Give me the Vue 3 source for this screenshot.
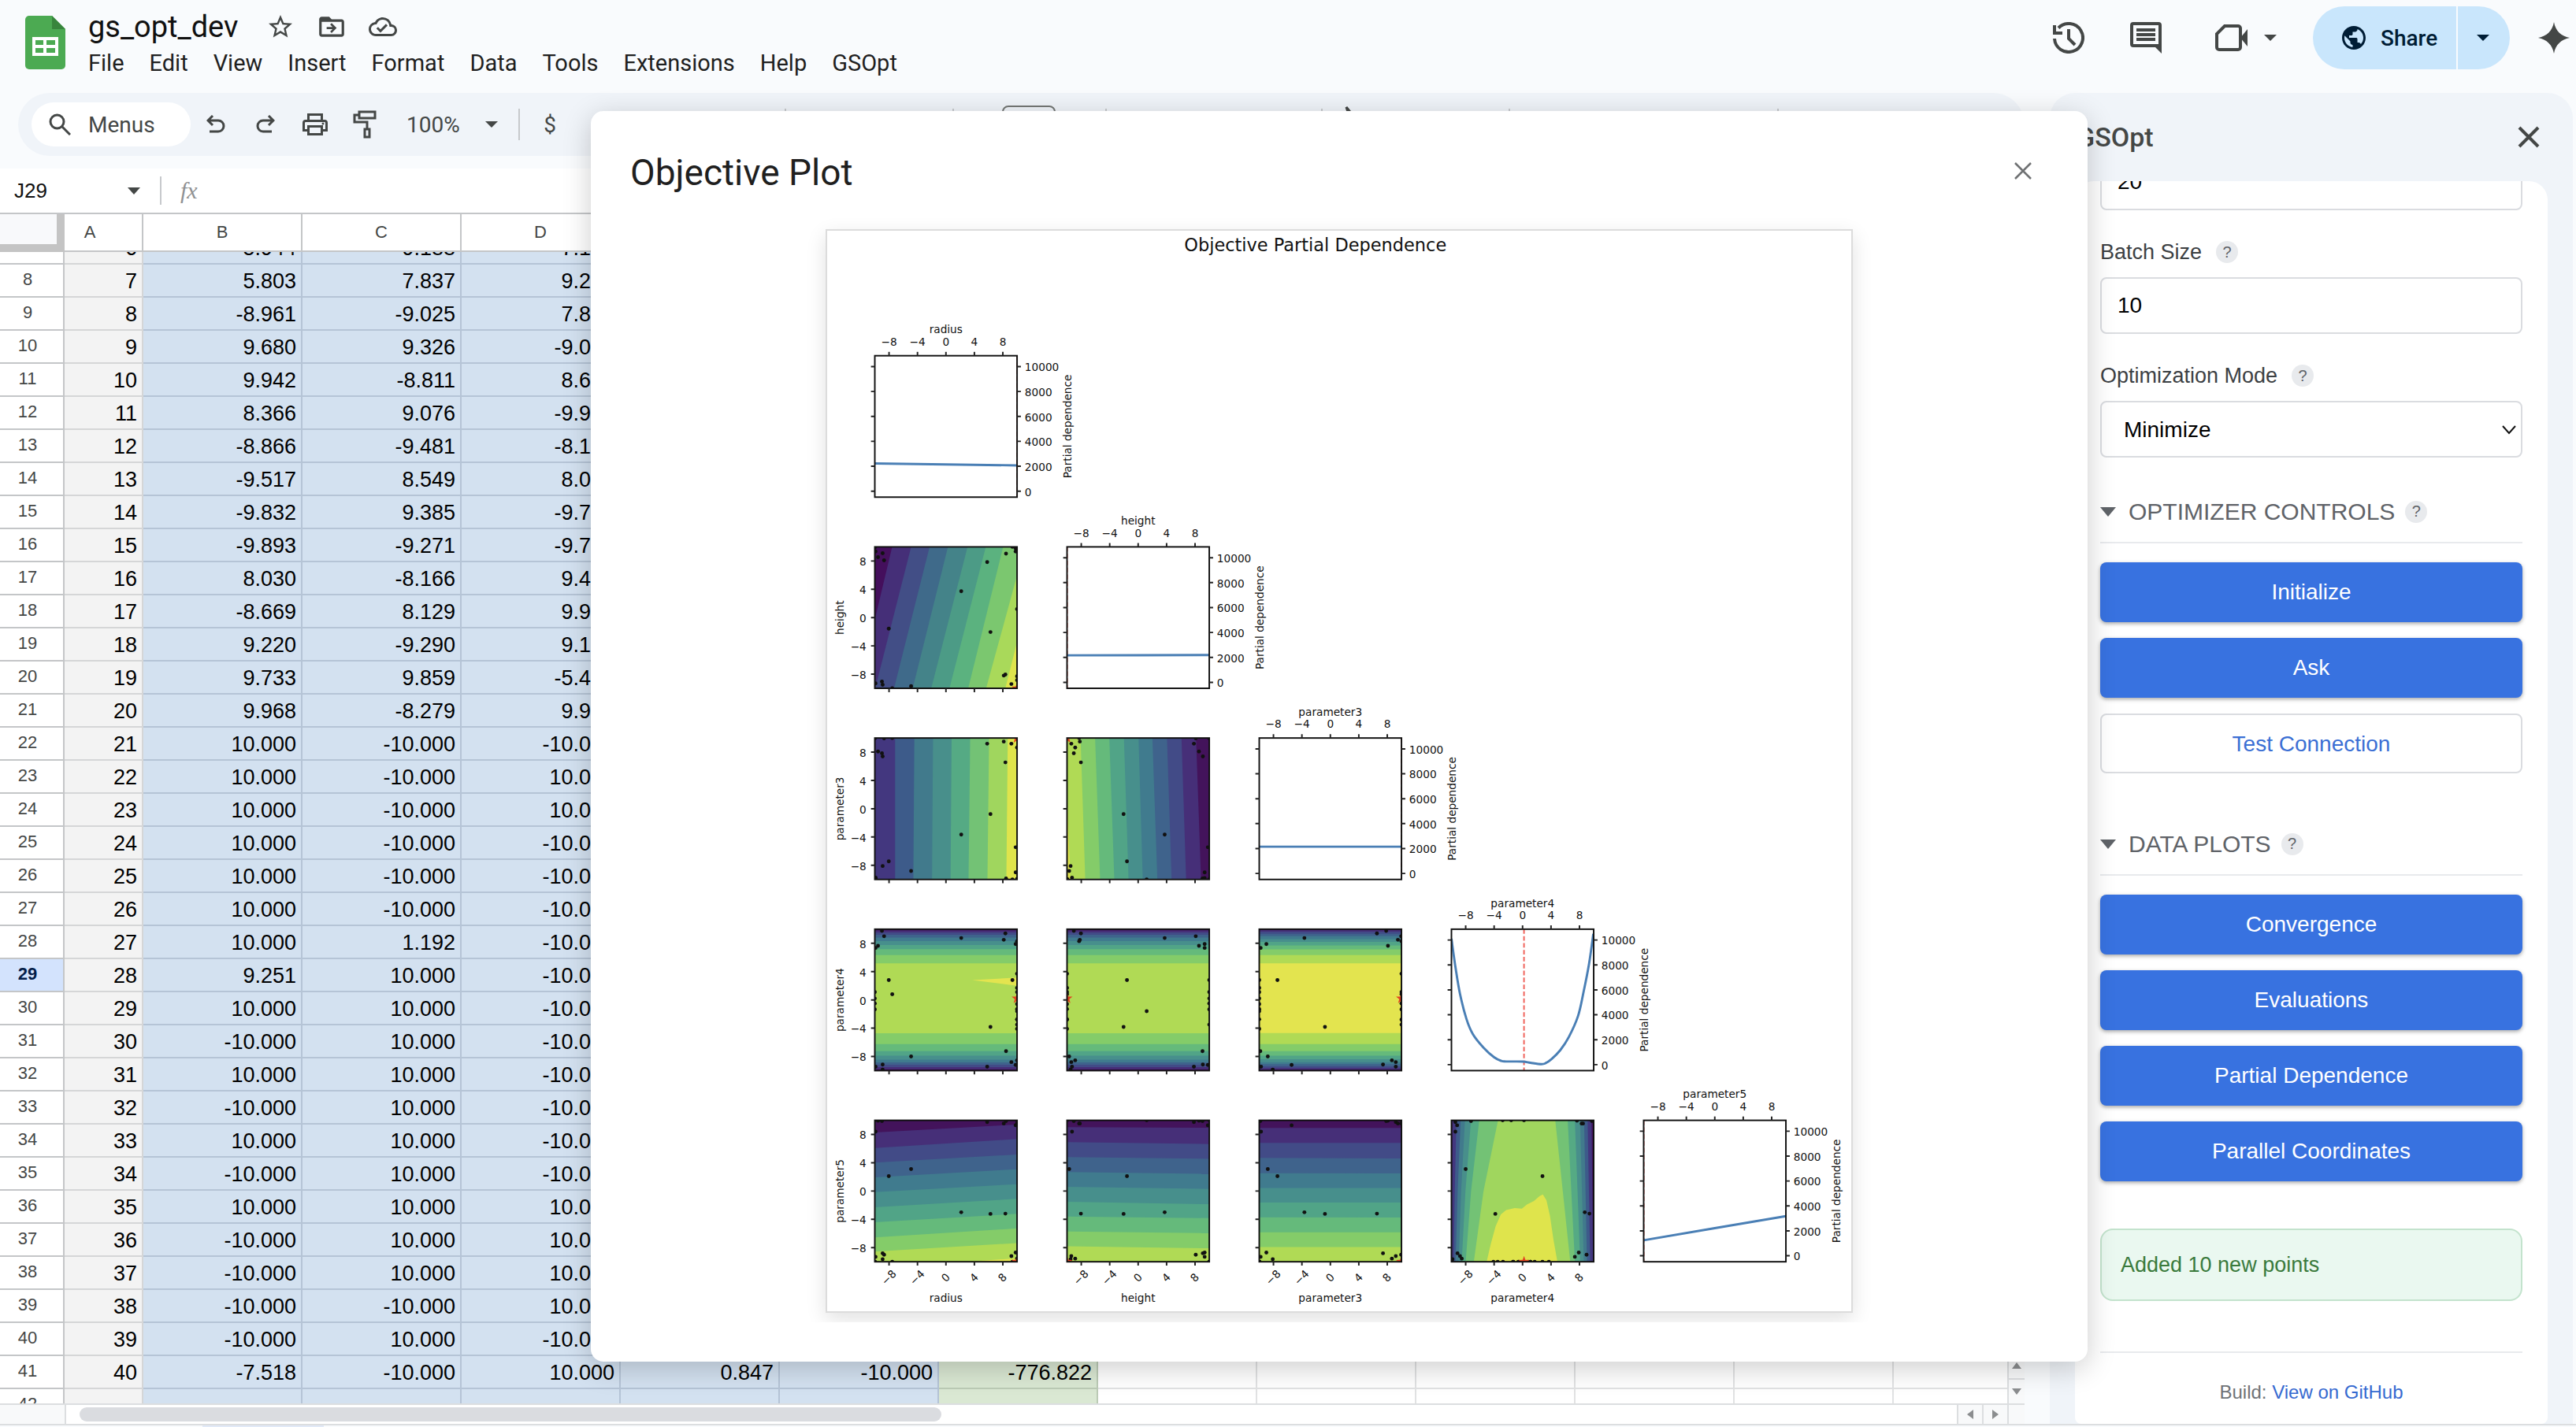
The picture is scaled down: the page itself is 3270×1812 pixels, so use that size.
<script setup>
import { ref } from 'vue'

const menus = ['File', 'Edit', 'View', 'Insert', 'Format', 'Data', 'Tools', 'Extensions', 'Help', 'GSOpt']
const columns = ['A', 'B', 'C', 'D', 'E', 'F', 'G', 'H', 'I', 'J', 'K', 'L', 'M']
const selectedRow = 29
const toolGroups = [
  { name: 'number', share: 213 },
  { name: 'size', share: 194 },
  { name: 'text', share: 274 },
  { name: 'fill', share: 238 },
  { name: 'align', share: 342 }
]

const values = [
  [5.944, 9.188, 7.149],
  [5.803, 7.837, 9.2],
  [-8.961, -9.025, 7.8],
  [9.68, 9.326, -9.0],
  [9.942, -8.811, 8.6],
  [8.366, 9.076, -9.9],
  [-8.866, -9.481, -8.1],
  [-9.517, 8.549, 8.0],
  [-9.832, 9.385, -9.7],
  [-9.893, -9.271, -9.7],
  [8.03, -8.166, 9.4],
  [-8.669, 8.129, 9.9],
  [9.22, -9.29, 9.1],
  [9.733, 9.859, -5.4],
  [9.968, -8.279, 9.9],
  [10, -10, -10],
  [10, -10, 10],
  [10, -10, 10],
  [10, -10, -10],
  [10, -10, -10],
  [10, -10, -10],
  [10, 1.192, -10],
  [9.251, 10, -10],
  [10, 10, -10],
  [-10, 10, -10],
  [10, 10, -10],
  [-10, 10, -10],
  [10, 10, -10],
  [-10, 10, -10],
  [10, 10, 10],
  [-10, 10, 10],
  [-10, 10, 10],
  [-10, -10, 10],
  [-10, 10, -10],
  [-7.518, -10, 10, 0.847, -10, -776.822],
  null
]
const rows = values.map((v, i) => ({
  number: i + 7,
  cells: columns.map((_, c) => {
    if (!v) return ''
    if (c === 0) return String(i + 6)
    return v[c - 1] === undefined ? '' : v[c - 1].toFixed(3)
  })
}))

const maxPoints = ref('20')
const batchSize = ref('10')
const mode = ref('Minimize')
const nameBox = ref('J29')
const zoomLevel = ref('100%')
const plotButtons = ['Convergence', 'Evaluations', 'Partial Dependence', 'Parallel Coordinates']

/* ---- partial dependence figure ---- */
const names = ['radius', 'height', 'parameter3', 'parameter4', 'parameter5']
const W = 185
const H = 184
const left = c => 62 + 250 * c
const top = r => 162.6 + 248.7 * r
const sx = v => ((v + 10) / 20) * W
const sy = v => ((10 - v) / 20) * H
const dy = v => ((10870 - v) / 11350) * H
const ticks = [-8, -4, 0, 4, 8]
const depTicks = [0, 2000, 4000, 6000, 8000, 10000]
const label = v => String(v).replace('-', '\u2212')

const best = [10, -10, 10, 0.2, -10]
const samples = [
  [2.15, 3.73, -3.65, 8.75, -3], [5.8, 7.84, 9.2, -9.45, 9.75], [6.26, -2.05, -0.76, -3.83, -3.23],
  [-8.04, -1.57, -7.44, 2.8, 2.1], [-4.9, -9.7, -8.8, -8, 3.1], [8.36, -8.05, 6.55, 9.4, -3.2],
  [8.13, -8.2, 9.5, 8.5, 9.55], [9.2, -9.4, 9.2, -8.8, -9.2], [9.8, 9.8, -5.45, -9.2, 9.3],
  [9.8, 9.35, -9, 7.9, -8.7], [8.45, 9.05, -9.85, -7.25, 9.9], [-9.55, 8.55, 8.1, 7.65, 9.95],
  [-9, -9.05, 7.85, 9.75, 9.9], [-8.9, 9.1, 7.4, -9.15, -8.8], [-8.9, -9.5, -8.1, -9.85, -9.65],
  [-8.7, 8.1, 9.95, 9, -9], [-7.55, -10, 10, 0.8, -10], [-9.9, -9.3, -9.75, -9.45, 8.4],
  [-9.9, 9.35, -9.8, 7.35, -9.3], [10, -8.85, 8.65, -8.55, -9.55], [10, -8.3, 10, 8.3, 9.55],
  [10, 1.2, -10, -1.6, 10], [9.35, 10, -10, 2.8, -10], [10, -10, 10, 3.7, -10],
  [10, -10, -10, 1.7, -10], [10, -10, -10, 1.1, -10], [10, -10, -10, -0.6, -10],
  [10, -10, -10, -1.3, -10], [10, -10, 10, -2.8, 10], [10, -10, -10, -2.75, -10],
  [10, -10, -10, -4.1, -10], [-10, 10, 10, 1.1, -10], [-10, 10, -10, 0.2, 10],
  [-10, 10, 10, -0.5, -10], [-10, 10, 10, -1.35, -10], [10, 10, 10, -3.5, -10]
]

const ramp10 = ['#440f5c', '#452f78', '#424e86', '#3f6a8a', '#448389', '#4c9b86', '#5bb27f', '#7bc76f', '#a9d95a', '#dfe44c']
const ramp11 = ['#43135b', '#462f78', '#424b87', '#3f638c', '#407b8e', '#478f8c', '#51a487', '#65ba7b', '#84cc69', '#b0da55', '#e3e44f']
const ramp9 = ['#43135b', '#43377f', '#3d5b8a', '#417a8c', '#488f8b', '#55aa84', '#73c275', '#a0d65e', '#dfe44c']

const poly = (pts, fill) => ({ fill, points: pts.map(p => sx(p[0]).toFixed(1) + ',' + sy(p[1]).toFixed(1)).join(' ') })
const full = fill => poly([[-10, 10], [10, 10], [10, -10], [-10, -10]], fill)
/* bands between steep contour lines, each given as [x at the top, x at the bottom] */
const vertical = (edges, colors) => [full(colors[0]), ...edges.map((e, i) => poly([[e[0], 10], [30, 10], [30, -10], [e[1], -10]], colors[i + 1]))]
/* bands between flat contour lines, each given as [y on the left, y on the right] */
const horizontal = (edges, colors) => [full(colors[0]), ...edges.map((e, i) => poly([[-10, e[0]], [10, e[1]], [10, -30], [-10, -30]], colors[i + 1]))]
const nested = (upper, lower, colors) => [full(colors[0]), ...upper.map((u, i) => poly([[-10, u], [10, u], [10, lower[i]], [-10, lower[i]]], colors[i + 1]))]

const up9 = [9.83, 9.54, 9.2, 8.8, 8.3, 7.75, 7.17, 6.35, 5.17]
const down9 = [-9.8, -9.5, -9.17, -8.83, -8.43, -7.9, -7.24, -6.24, -4.72]
const up10 = [9.88, 9.65, 9.35, 9, 8.6, 8.2, 7.7, 7.15, 6.35, 5.17]
const down10 = [-9.88, -9.65, -9.4, -9.1, -8.8, -8.4, -7.9, -7.25, -6.25, -4.7]

const lastLeft = [[-9.85, -10], [-9.3, -9.7], [-8.7, -9.4], [-8.1, -9], [-7.25, -8.55], [-6.1, -8], [-3.45, -6.85]]
const lastRight = [[9.7, 9.9], [9.15, 9.5], [8.65, 9.05], [8.1, 8.6], [7.35, 8.1], [6.35, 7.35], [4.6, 6.7]]
const ridge = [[-5.05, -10], [-4.5, -7.6], [-3.8, -5], [-3.05, -3.3], [-2.3, -2.7], [-1.1, -2.4], [-0.1, -2.5], [0.6, -1.9], [1.6, -1.4], [2.4, -0.7], [2.85, -0.5], [3.35, -1.3], [3.85, -3.5], [4.35, -6.9], [4.9, -10]]

const maps = {
  '1-0': vertical([[-7.57, -12.3], [-4.9, -9.95], [-2.3, -7.3], [0.28, -4.67], [3.04, -2.06], [5.6, 0.5], [8.04, 3.13], [11.1, 5.65], [13.4, 8.36]], ramp10),
  '2-0': vertical([[-9.9, -9.95], [-7.15, -7.15], [-4.44, -4.58], [-1.82, -1.96], [0.8, 0.65], [3.41, 3.18], [6.07, 5.84], [8.69, 8.5]], ramp9),
  '2-1': vertical([[-10.3, -9.53], [-8.1, -7.44], [-6.05, -5.35], [-4.05, -3.35], [-2, -1.35], [0.05, 0.65], [2, 2.7], [4.05, 4.7], [6.1, 6.75], [8.14, 8.84]], [...ramp11].reverse()),
  '3-0': [...nested(up9, down9, ramp11), poly([[3.7, 2.8], [10, 3.15], [10, 2]], ramp11[10])],
  '3-1': nested(up9, down9, ramp11),
  '3-2': nested(up10, down10, ramp11),
  '4-0': [...horizontal([[8.29, 9.4], [6.1, 7.36], [4.01, 5.17], [1.93, 3.09], [-0.15, 0.97], [-2.3, -1.1], [-4.42, -3.23], [-6.54, -5.28], [-8.55, -7.36]], ramp11), poly([[2.8, -10], [10, -9.5], [10, -10]], ramp11[10])],
  '4-1': horizontal([[9.03, 8.96], [6.91, 6.65], [4.8, 4.57], [2.68, 2.42], [0.6, 0.3], [-1.52, -1.86], [-3.6, -3.83], [-5.72, -5.95], [-7.8, -8.1]], ramp11),
  '4-2': horizontal([[8.92, 8.92], [6.8, 6.8], [4.68, 4.61], [2.53, 2.5], [0.45, 0.42], [-1.64, -1.64], [-3.72, -3.75], [-5.84, -5.84], [-7.92, -7.92]], ramp11),
  '4-3': [full(ramp9[0]), ...lastLeft.map((l, i) => poly([[l[0], 10], [lastRight[i][0], 10], [(lastRight[i][0] + lastRight[i][1]) / 2, 0], [lastRight[i][1], -10], [l[1], -10], [l[0] * 0.4 + l[1] * 0.6, 0]], ramp9[i + 1])), poly(ridge, ramp9[8])]
}
const heat = Object.entries(maps).map(([key, bands]) => {
  const [r, c] = key.split('-').map(Number)
  return { key, r, c, bands, dots: samples.map(s => [sx(s[c]), sy(s[r])]), star: starAt(sx(best[c]), sy(best[r])) }
})

function starAt(cx, cy) {
  return Array.from({ length: 10 }, (_, i) => {
    const rad = i % 2 ? 3 : 7.5
    const a = -Math.PI / 2 + (i * Math.PI) / 5
    return (cx + rad * Math.cos(a)).toFixed(1) + ',' + (cy + rad * Math.sin(a)).toFixed(1)
  }).join(' ')
}

function smooth(data) {
  const p = data.map(([x, y]) => [sx(x), dy(y)])
  let d = `M${p[0]}`
  for (let i = 0; i < p.length - 1; i++) {
    const a = p[i - 1] || p[i]
    const b = p[i]
    const c = p[i + 1]
    const e = p[i + 2] || c
    d += `C${b[0] + (c[0] - a[0]) / 6},${b[1] + (c[1] - a[1]) / 6} ${c[0] - (e[0] - b[0]) / 6},${c[1] - (e[1] - b[1]) / 6} ${c[0]},${c[1]}`
  }
  return d
}
const curves = [
  [[-10, 2219], [10, 2070]],
  [[-10, 2165], [10, 2190]],
  [[-10, 2147], [10, 2147]],
  [[-10, 10100], [-9.4, 7680], [-8.8, 5680], [-7.9, 3680], [-7, 2460], [-5.5, 1370], [-4, 590], [-3, 300], [-2.3, 252], [0, 245], [1.1, 150], [2.6, 42], [3.2, 105], [4.1, 460], [5.3, 1160], [6.5, 2210], [7.8, 3900], [8.6, 5900], [9.35, 8100], [9.95, 10500]],
  [[-10, 1247], [10, 3180]]
].map(smooth)
</script>

<template>
  <div class="app">
    <header class="top">
      <svg class="logo" viewBox="0 0 51 68" aria-hidden="true">
        <path d="M5 0h29l17 17v46a5 5 0 0 1-5 5H5a5 5 0 0 1-5-5V5a5 5 0 0 1 5-5z" fill="#4caa52" />
        <path d="M34 0l17 17H34z" fill="#38853c" />
        <path d="M9 27h33v24H9zM13 31v6h10v-6zm14 0v6h11v-6zM13 41v6h10v-6zm14 0v6h11v-6z" fill="#fff" fill-rule="evenodd" />
      </svg>
      <div class="doc">
        <div class="doc-line">
          <h1>gs_opt_dev</h1>
          <button class="bare" aria-label="Star">
            <svg width="36" height="36" viewBox="0 0 24 24"><path fill="#444746" d="M22 9.24l-7.19-.62L12 2 9.19 8.63 2 9.24l5.46 4.73L5.82 21 12 17.27 18.18 21l-1.63-7.03L22 9.24zM12 15.4l-3.76 2.27 1-4.28-3.32-2.88 4.38-.38L12 6.1l1.71 4.04 4.38.38-3.32 2.88 1 4.28L12 15.4z" /></svg>
          </button>
          <button class="bare" aria-label="Move">
            <svg width="38" height="38" viewBox="0 0 24 24"><path fill="#444746" d="M20 6h-8l-2-2H4c-1.1 0-2 .9-2 2v12c0 1.1.9 2 2 2h16c1.1 0 2-.9 2-2V8c0-1.1-.9-2-2-2zm0 12H4V8h16v10zM12 17l4-4-4-4-1.2 1.2 1.9 1.9H8v1.8h4.7l-1.9 1.9z" /></svg>
          </button>
          <button class="bare" aria-label="Saved to Drive">
            <svg width="36" height="36" viewBox="0 0 24 24"><path fill="#444746" d="M19.35 10.04A7.49 7.49 0 0 0 12 4C9.11 4 6.6 5.64 5.35 8.04A5.994 5.994 0 0 0 0 14c0 3.31 2.69 6 6 6h13c2.76 0 5-2.24 5-5 0-2.64-2.05-4.78-4.65-4.96zM19 18H6c-2.21 0-4-1.79-4-4 0-2.05 1.53-3.76 3.56-3.97l1.07-.11.5-.95A5.469 5.469 0 0 1 12 6c2.62 0 4.88 1.86 5.39 4.43l.3 1.5 1.53.11A2.98 2.98 0 0 1 22 15c0 1.65-1.35 3-3 3zm-9-3.82l-2.09-2.09L6.5 13.5 10 17l6.01-6.01-1.41-1.41z" /></svg>
          </button>
        </div>
        <nav class="menus"><button v-for="m in menus" :key="m" class="bare">{{ m }}</button></nav>
      </div>
      <div class="actions">
        <button class="bare" aria-label="Version history">
          <svg width="40" height="40" viewBox="0 0 40 40" fill="none" stroke="#444746" stroke-width="4"><path d="M2 21a18 18 0 1 0 5-13.500M2 4v10h10M20 9v12l8 8" /></svg>
        </button>
        <button class="bare" aria-label="Comments">
          <svg width="40" height="40" viewBox="0 0 40 40"><path fill="#444746" fill-rule="evenodd" d="M4 0h32a4 4 0 0 1 4 4v36l-8-8H4a4 4 0 0 1-4-4V4a4 4 0 0 1 4-4zm0 4v24h32V4zM8 8h24v4H8zm0 6h24v4H8zm0 6h24v4H8z" /></svg>
        </button>
        <button class="bare meet" aria-label="Meet">
          <svg width="42" height="34" viewBox="0 0 42 34"><path d="M12 2h17a3 3 0 0 1 3 3v24a3 3 0 0 1-3 3H5a3 3 0 0 1-3-3V12z" fill="none" stroke="#444746" stroke-width="4" /><path d="M32 17l9-11v22z" fill="#444746" /></svg>
          <svg width="16" height="8" viewBox="0 0 16 8"><path d="M0 0h16l-8 8z" fill="#444746" /></svg>
        </button>
        <div class="share">
          <button class="bare share-main">
            <svg width="36" height="36" viewBox="0 0 24 24"><path fill="#001d35" d="M12 2C6.480 2 2 6.480 2 12s4.480 10 10 10 10-4.480 10-10S17.520 2 12 2zm-1 17.930c-3.950-.490-7-3.850-7-7.930 0-.620.080-1.210.210-1.790L9 15v1c0 1.100.9 2 2 2v1.930zm6.900-2.540c-.260-.810-1-1.390-1.900-1.390h-1v-3c0-.550-.450-1-1-1H8v-2h2c.550 0 1-.450 1-1V7h2c1.100 0 2-.9 2-2v-.410c2.930 1.190 5 4.060 5 7.410 0 2.080-.8 3.970-2.100 5.390z" /></svg>
            Share
          </button>
          <button class="bare share-more" aria-label="Share options"><svg width="16" height="8" viewBox="0 0 16 8"><path d="M0 0h16l-8 8z" fill="#001d35" /></svg></button>
        </div>
        <button class="bare" aria-label="Gemini"><svg width="40" height="40" viewBox="0 0 40 40"><path fill="#444746" d="M20 0c2 11 9 18 20 20-11 2-18 9-20 20-2-11-9-18-20-20C11 18 18 11 20 0z" /></svg></button>
      </div>
    </header>

    <div class="body">
      <main class="sheet">
        <div class="toolbar">
          <button class="bare search">
            <svg width="28" height="28" viewBox="0 0 28 28" fill="none" stroke="#444746" stroke-width="3"><circle cx="10.500" cy="10.500" r="8.500" /><path d="M17 17l10 10" /></svg>
            Menus
          </button>
          <button class="bare tool" aria-label="Undo"><svg width="24" height="24" viewBox="0 0 24 24" fill="none" stroke="#444746" stroke-width="3"><path d="M8 1L2 7l6 6M2 7h13a7 7 0 0 1 0 14H4" /></svg></button>
          <button class="bare tool" aria-label="Redo"><svg width="24" height="24" viewBox="0 0 24 24" fill="none" stroke="#444746" stroke-width="3"><path d="M16 1l6 6-6 6M22 7H9a7 7 0 0 0 0 14h11" /></svg></button>
          <button class="bare tool" aria-label="Print"><svg width="32" height="28" viewBox="0 0 32 28"><path fill="#444746" fill-rule="evenodd" d="M6 0h20v8h2a4 4 0 0 1 4 4v11h-6v5H6v-5H0V12a4 4 0 0 1 4-4h2zm3 3v5h14V3zM3 20h3v-5h20v5h3v-8a1 1 0 0 0-1-1H4a1 1 0 0 0-1 1zm6-2v7h14v-7z" /><circle cx="26" cy="13" r="1.500" fill="#444746" /></svg></button>
          <button class="bare tool" aria-label="Paint format"><svg width="30" height="36" viewBox="0 0 30 36" fill="none" stroke="#444746" stroke-width="3"><path d="M8 2h20v8H8zM8 6H2v9h16v9M15 24h6v10h-6z" /></svg></button>
          <label class="zoom">
            <select v-model="zoomLevel" aria-label="Zoom"><option>100%</option></select>
            <svg width="16" height="8" viewBox="0 0 16 8"><path d="M0 0h16l-8 8z" fill="#444746" /></svg>
          </label>
          <i class="rule"></i>
          <button class="bare dollar" aria-label="Format as currency">$</button>
          <div class="more">
            <span v-for="g in toolGroups" :key="g.name" class="group" :style="{ flexGrow: g.share }">
              <i v-if="g.name === 'size'" class="font-size"></i>
              <svg v-if="g.name === 'fill'" width="34" height="46" viewBox="0 0 34 46"><path d="M14 1l16 20-12 12L4 20l12-13z" fill="none" stroke="#444746" stroke-width="3" /></svg>
            </span>
          </div>
        </div>

        <div class="formula">
          <input v-model="nameBox" class="name-box" aria-label="Name box" />
          <svg width="16" height="9" viewBox="0 0 16 9"><path d="M0 0h16l-8 9z" fill="#444746" /></svg>
          <i class="rule short"></i>
          <span class="fx">fx</span>
        </div>

        <div class="grid">
          <table class="cells head">
            <colgroup><col class="w-num" /><col class="w-a" /><col v-for="c in 12" :key="c" class="w-col" /></colgroup>
            <thead><tr><th class="corner"></th><th v-for="c in columns" :key="c" scope="col">{{ c }}</th></tr></thead>
          </table>
          <div class="scroll">
            <table class="cells data">
              <colgroup><col class="w-num" /><col class="w-a" /><col v-for="c in 12" :key="c" class="w-col" /></colgroup>
              <tbody>
                <tr v-for="r in rows" :key="r.number">
                  <th scope="row" :class="{ selected: r.number === selectedRow }">{{ r.number }}</th>
                  <td v-for="(v, i) in r.cells" :key="i" :class="{ index: i === 0, param: i > 0 && i < 6, result: i === 6 }">{{ v }}</td>
                </tr>
              </tbody>
            </table>
            <div class="vbar">
              <span><svg width="12" height="8" viewBox="0 0 12 8"><path d="M0 8h12L6 0z" fill="#8b8d8f" /></svg></span>
              <span><svg width="12" height="8" viewBox="0 0 12 8"><path d="M0 0h12L6 8z" fill="#8b8d8f" /></svg></span>
            </div>
          </div>
          <div class="hbar">
            <i class="hbar-corner"></i>
            <i class="thumb"></i>
            <span class="arrows">
              <span><svg width="8" height="12" viewBox="0 0 8 12"><path d="M8 0v12L0 6z" fill="#8b8d8f" /></svg></span>
              <span><svg width="8" height="12" viewBox="0 0 8 12"><path d="M0 0v12l8-6z" fill="#8b8d8f" /></svg></span>
              <i></i>
            </span>
          </div>
        </div>
      </main>

      <aside class="panel">
        <div class="panel-head">
          <h2>GSOpt</h2>
          <button class="bare" aria-label="Close panel"><svg width="28" height="28" viewBox="0 0 28 28" stroke="#444746" stroke-width="4"><path d="M2 2l24 24M26 2L2 26" /></svg></button>
        </div>
        <div class="card">
          <div class="card-scroll">
            <input v-model="maxPoints" class="field" aria-label="Number of points" />
            <div class="caption"><label for="batch">Batch Size</label><span class="help">?</span></div>
            <input id="batch" v-model="batchSize" class="field" />
            <div class="caption"><label for="mode">Optimization Mode</label><span class="help">?</span></div>
            <div class="select-wrap">
              <select id="mode" v-model="mode" class="field select"><option>Minimize</option><option>Maximize</option></select>
              <svg width="18" height="12" viewBox="0 0 18 12" fill="none" stroke="#111" stroke-width="2"><path d="M1 1l8 9 8-9" /></svg>
            </div>

            <section>
              <h3><svg width="20" height="12" viewBox="0 0 20 12"><path d="M0 0h20L10 12z" fill="#5f6368" /></svg>OPTIMIZER CONTROLS<span class="help">?</span></h3>
              <div class="stack">
                <button class="primary">Initialize</button>
                <button class="primary">Ask</button>
                <button class="primary outline">Test Connection</button>
              </div>
            </section>
            <section>
              <h3><svg width="20" height="12" viewBox="0 0 20 12"><path d="M0 0h20L10 12z" fill="#5f6368" /></svg>DATA PLOTS<span class="help">?</span></h3>
              <div class="stack"><button v-for="b in plotButtons" :key="b" class="primary">{{ b }}</button></div>
            </section>

            <p class="notice" role="status">Added 10 new points</p>
            <footer>Build: <a href="#">View on GitHub</a></footer>
          </div>
        </div>
      </aside>
    </div>
    <div class="tabs"><i></i></div>

    <div class="dialog" role="dialog" aria-labelledby="dialog-title">
      <div class="dialog-head">
        <h2 id="dialog-title">Objective Plot</h2>
        <button class="bare" aria-label="Close"><svg width="22" height="22" viewBox="0 0 22 22" stroke="#6f7173" stroke-width="2.500"><path d="M1 1l20 20M21 1L1 21" /></svg></button>
      </div>
      <div class="dialog-body">
        <div class="frame">
          <svg class="figure" viewBox="0 0 1332 1406" role="img" aria-label="Objective Partial Dependence">
            <defs><clipPath id="axes"><rect :width="W" :height="H" /></clipPath></defs>
            <text class="title" x="635" y="27">Objective Partial Dependence</text>

            <g v-for="(n, i) in names" :key="n" :transform="`translate(${left(i)} ${top(i)})`">
              <g clip-path="url(#axes)">
                <path :d="`M${sx(best[i])} 0V${H}`" class="minimum" />
                <path :d="curves[i]" class="curve" />
              </g>
              <rect :width="W" :height="H" class="box" />
              <g v-for="t in ticks" :key="t">
                <path :d="`M${sx(t)} 0v-5`" class="tick" />
                <text :x="sx(t)" y="-13" class="mid">{{ label(t) }}</text>
              </g>
              <g v-for="t in depTicks" :key="t">
                <path :d="`M0 ${dy(t)}h-5M${W} ${dy(t)}h5`" class="tick" />
                <text :x="W + 10" :y="dy(t) + 6">{{ t }}</text>
              </g>
              <text :x="W / 2" y="-29" class="mid">{{ n }}</text>
              <text :transform="`translate(${W + 71} ${H / 2}) rotate(-90)`" class="mid">Partial dependence</text>
            </g>

            <g v-for="m in heat" :key="m.key" :transform="`translate(${left(m.c)} ${top(m.r)})`">
              <g clip-path="url(#axes)">
                <polygon v-for="(b, i) in m.bands" :key="i" :points="b.points" :fill="b.fill" />
                <circle v-for="(d, i) in m.dots" :key="'d' + i" :cx="d[0]" :cy="d[1]" r="2.500" />
                <polygon :points="m.star" fill="#e2401f" />
              </g>
              <rect :width="W" :height="H" class="box" />
              <g v-for="t in ticks" :key="t">
                <path :d="`M${sx(t)} ${H}v5M0 ${sy(t)}h-5`" class="tick" />
                <text v-if="m.c === 0" x="-11" :y="sy(t) + 6" class="end">{{ label(t) }}</text>
                <text v-if="m.r === 4" :transform="`translate(${sx(t) + 3} ${H + 24}) rotate(-45)`" class="mid">{{ label(t) }}</text>
              </g>
              <text v-if="m.c === 0" :transform="`translate(-40 ${H / 2}) rotate(-90)`" class="mid">{{ names[m.r] }}</text>
              <text v-if="m.r === 4" :x="W / 2" :y="H + 52" class="mid">{{ names[m.c] }}</text>
            </g>
          </svg>
        </div>
      </div>
    </div>
  </div>
</template>

<style>
html, body { margin: 0; overflow: hidden; }
</style>

<style scoped>
* { box-sizing: border-box; }
h1, h2, h3, p { margin: 0; font-weight: 400; }
svg { display: block; flex: none; }
.app { position: relative; display: flex; flex-direction: column; height: 100vh; overflow: hidden; background: #f9fbfd; color: #1f1f1f; font-family: Roboto, "Liberation Sans", sans-serif; font-size: 28px; }
.bare { padding: 0; border: 0; background: none; color: inherit; font: inherit; display: flex; align-items: center; }

.top { display: flex; align-items: flex-start; height: 118px; padding: 0 8px 0 32px; flex: none; }
.logo { width: 51px; height: 68px; margin-top: 20px; }
.doc { margin-left: 29px; }
.doc-line { display: flex; align-items: center; gap: 28px; height: 60px; margin-top: 4px; }
.doc-line h1 { font-size: 38px; color: #111; line-height: 44px; margin-right: 8px; }
.menus { display: flex; gap: 32px; font-size: 29px; line-height: 32px; }
.actions { display: flex; align-items: center; margin-left: auto; height: 80px; margin-top: 8px; gap: 58px; }
.meet { gap: 20px; margin-left: 10px; margin-right: -12px; }
.share { display: flex; gap: 2px; height: 80px; margin-right: -22px; }
.share-main { width: 182px; padding-left: 34px; gap: 16px; border-radius: 40px 0 0 40px; background: #c9e6fc; color: #001d35; font-weight: 500; }
.share-more { width: 66px; padding-left: 24px; border-radius: 0 40px 40px 0; background: #c9e6fc; }

.body { display: flex; flex: 1; min-height: 0; padding-right: 4px; gap: 32px; }
.sheet { flex: 1; min-width: 0; display: flex; flex-direction: column; }
.toolbar { display: flex; align-items: center; height: 80px; margin-left: 23px; padding-left: 17px; border-radius: 40px; background: #f0f4f9; color: #444746; flex: none; overflow: hidden; }
.search { width: 202px; height: 56px; padding-left: 22px; gap: 22px; border-radius: 28px; background: #fff; flex: none; }
.tool { width: 63px; height: 56px; justify-content: center; flex: none; }
.zoom { display: flex; align-items: center; margin: 0 26px 0 22px; gap: 20px; }
.zoom select { appearance: none; width: 80px; padding: 0; border: 0; background: none; color: inherit; font: inherit; }
.rule { width: 2px; height: 40px; background: #c7c9cc; flex: none; }
.rule.short { height: 36px; }
.dollar { width: 76px; justify-content: center; flex: none; }
.more { display: flex; flex: 1; margin: 0 312px 0 260px; border-right: 2px solid #c7c9cc; }
.group { display: flex; align-items: center; flex: 0 1 0; min-width: 0; height: 40px; border-left: 2px solid #c7c9cc; }
.group svg { margin-left: 16px; }
.font-size { flex: none; width: 68px; height: 48px; margin-left: 61px; border: 2px solid #747775; border-radius: 8px; }

.formula { display: flex; align-items: center; height: 56px; margin-top: 16px; background: #fff; flex: none; }
.name-box { width: 144px; margin-left: 18px; padding: 0; border: 0; background: none; color: #111; font: 26px "Liberation Sans", Arial, sans-serif; }
.formula .rule { margin: 0 24px 0 25px; }
.fx { color: #8f9193; font: italic 30px "Liberation Serif", serif; }

.grid { display: flex; flex-direction: column; flex: 1; min-height: 0; overflow: hidden; border-top: 2px solid #c4c6c8; background: #fff; font-family: "Liberation Sans", Arial, sans-serif; }
.cells { table-layout: fixed; width: 2605px; border-spacing: 0; flex: none; }
.w-num { width: 82px; }
.w-a { width: 100px; }
.w-col { width: 202px; }
.cells th { padding: 0; font-size: 22px; font-weight: 400; color: #444746; }
.head th { height: 48px; border-right: 2px solid #c4c6c8; border-bottom: 2px solid #c4c6c8; }
.head th:nth-child(2) { padding-right: 34px; }
.head .corner { border-right: 10px solid #c4c4c4; border-bottom: 10px solid #c4c4c4; background: #f8f9fb; }
.scroll { position: relative; flex: 1; min-height: 0; overflow: hidden; border-bottom: 2px solid #dcdee0; }
.data { margin-top: -26px; }
.data th, .data td { height: 42px; border-right: 2px solid #e1e2e3; border-bottom: 2px solid #e1e2e3; }
.data th { padding: 0 10px 2px 0; line-height: 38px; border-color: #c4c6c8; }
.data th.selected { background: #d3e3fd; color: #041e49; font-weight: 700; }
.data td { padding: 2px 6px 0 0; line-height: 38px; text-align: right; font-size: 27px; color: #000; white-space: nowrap; overflow: hidden; }
.data td.index { background: #f3f3f3; border-color: #d5d6d7; }
.data td.param { background: #d3e1f0; border-color: #b5c4d6; }
.data td.result { background: #dae8d3; border-color: #bccbb6; }
.vbar { position: absolute; right: 0; top: 0; bottom: 0; display: flex; flex-direction: column; justify-content: flex-end; width: 22px; border-left: 2px solid #dcdee0; background: #f8f9fa; }
.vbar span { display: flex; align-items: center; justify-content: center; height: 32px; border-top: 2px solid #dcdee0; }
.vbar span:first-child { border-top: 0; }
.hbar { display: flex; align-items: center; height: 24px; flex: none; }
.hbar-corner { width: 84px; height: 24px; background: #f8f9fa; border-right: 2px solid #dcdee0; }
.thumb { width: 1094px; height: 18px; margin-left: 17px; border-radius: 9px; background: #dadce0; }
.arrows { display: flex; height: 24px; margin-left: auto; background: #f8f9fa; }
.arrows span { display: flex; align-items: center; justify-content: center; width: 32px; border-left: 2px solid #dcdee0; }
.arrows i { width: 22px; border-left: 2px solid #dcdee0; }
.tabs { height: 4px; padding-left: 257px; border-top: 2px solid #dcdee0; flex: none; }
.tabs i { display: block; width: 154px; height: 2px; background: #e1e9f7; }

.panel { display: flex; flex-direction: column; width: 664px; padding: 0 32px; border-radius: 32px 32px 0 0; background: #f0f4f9; flex: none; }
.panel-head { display: flex; align-items: center; justify-content: space-between; height: 112px; padding: 0 10px 0 2px; color: #444746; flex: none; }
.panel-head h2 { font-size: 34px; font-weight: 500; }
.card { flex: 1; min-height: 0; overflow: hidden; padding: 0 32px; border-radius: 24px 24px 8px 8px; background: #fff; font-family: "Liberation Sans", Arial, sans-serif; }
.card-scroll { margin-top: -35px; }
.field { display: block; width: 100%; height: 72px; padding: 0 20px; border: 2px solid #dadce0; border-radius: 8px; background: #fff; color: #000; font: 28px "Liberation Sans", Arial, sans-serif; }
.caption { display: flex; align-items: center; gap: 18px; height: 32px; margin: 37px 0 16px; font-size: 27px; color: #3c4043; }
.help { display: inline-flex; align-items: center; justify-content: center; width: 28px; height: 28px; border-radius: 14px; background: #e8eaed; color: #5f6368; font-size: 20px; }
.select-wrap { position: relative; }
.select { appearance: none; padding: 0 28px; }
.select-wrap svg { position: absolute; right: 8px; top: 31px; }
section { margin-top: 39px; }
h3 { display: flex; align-items: center; height: 70px; padding-bottom: 9px; border-bottom: 2px solid #e8eaed; font-size: 30px; color: #5f6368; }
h3 svg { margin-right: 16px; }
h3 .help { margin-left: 13px; }
.stack { display: flex; flex-direction: column; gap: 20px; padding-top: 24px; }
section + section { margin-top: 60px; }
.primary { height: 76px; border: 0; border-radius: 8px; background: #3872e0; color: #fff; font: 28px "Liberation Sans", Arial, sans-serif; box-shadow: 0 2px 5px rgba(0, 0, 0, .35); }
.outline { padding-top: 3px; border: 2px solid #dadce0; background: #fff; color: #3b6fd4; box-shadow: none; }
.notice { height: 92px; margin-top: 60px; padding: 0 24px; border: 2px solid #c3e3cd; border-radius: 16px; background: #eaf8f0; color: #3a7a3c; font-size: 27px; line-height: 88px; }
footer { margin-top: 64px; padding-top: 34px; border-top: 2px solid #e8eaed; color: #6f7377; font-size: 24px; line-height: 32px; text-align: center; }
footer a { color: #3569d0; text-decoration: none; }

.dialog { position: absolute; left: 750px; right: 620px; top: 141px; padding-bottom: 50px; border-radius: 16px; background: #fff; box-shadow: 0 8px 36px rgba(0, 0, 0, .2); }
.dialog-head { display: flex; align-items: center; justify-content: space-between; height: 136px; padding: 20px 71px 0 50px; }
.dialog-head h2 { font-size: 46px; line-height: 56px; }
.dialog-head button { align-self: flex-start; margin-top: 45px; }
.dialog-body { padding: 14px 24px 12px; overflow: hidden; }
.frame { max-width: 1304px; margin: 0 auto; border: 2px solid #dcdcdc; background: #fff; box-shadow: 0 8px 24px rgba(0, 0, 0, .12); }
.figure { width: 100%; font-family: "DejaVu Sans", sans-serif; font-size: 14px; fill: #111; }
.title { font-size: 23px; text-anchor: middle; }
.mid { text-anchor: middle; }
.end { text-anchor: end; }
.box { fill: none; stroke: #111; stroke-width: 2px; }
.tick { fill: none; stroke: #222; stroke-width: 2px; }
.curve { fill: none; stroke: #4a7fb5; stroke-width: 3px; }
.minimum { fill: none; stroke: #f0625a; stroke-width: 2px; stroke-dasharray: 6 3; }
</style>
